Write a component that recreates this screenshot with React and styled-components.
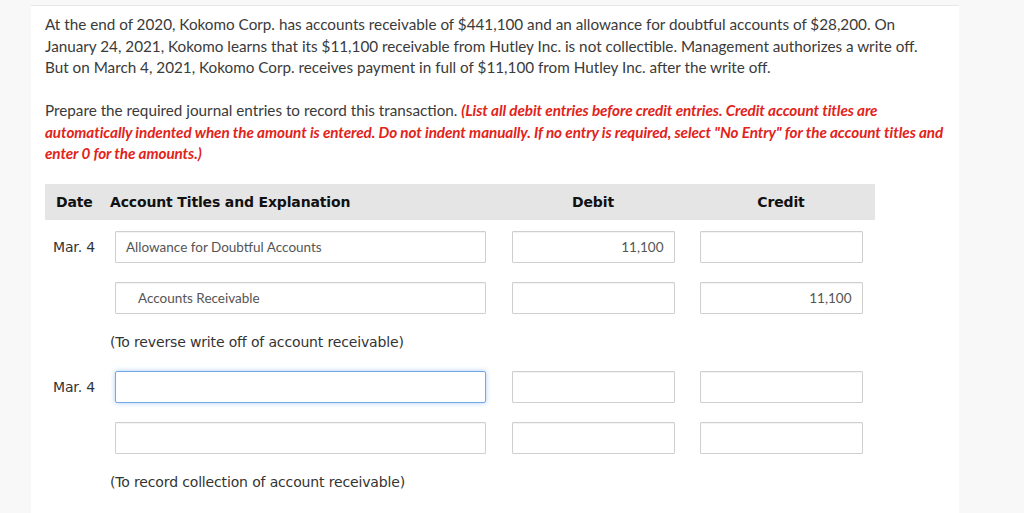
import React from 'react';
import styled, { createGlobalStyle } from 'styled-components';

const GlobalStyle = createGlobalStyle`
    html, body {
        margin: 0;
        padding: 0;
        background-color: #f8f8f8;
    }
    body {
        font-family: Lato, "Open Sans", sans-serif;
        color: #333;
    }
`;

const Page = styled.div`
    display: flex;
    height: 513px;
    overflow: hidden;
`;

const Gutter = styled.div`
    width: 31px;
    flex-shrink: 0;
`;

const Panel = styled.div`
    width: 928px;
    flex-shrink: 0;
    margin-top: 5px;
    background-color: #ffffff;
    border-top: 1px solid #e8e8e8;
    padding: 8px 0 0 14px;
    box-sizing: border-box;
`;

const Paragraph = styled.p`
    max-width: ${props => props.width || 898}px;
    margin: 0 0 ${props => props.gap || 0}px 0;
    font-size: 15.25px;
    line-height: 21.5px;
    color: #3a3a3a;
`;

const Instructions = styled.span`
    color: #e2231a;
    font-weight: 700;
    font-style: italic;
    letter-spacing: -0.08px;
`;

const COLUMNS = '58px 396px 188px 188px';

const HeaderBar = styled.div`
    display: grid;
    grid-template-columns: ${COLUMNS};
    width: 830px;
    align-items: center;
    height: 36px;
    margin-top: 19px;
    background-color: #e5e5e5;
    font-family: "DejaVu Sans", Verdana, sans-serif;
    font-weight: 700;
    font-size: 14px;
    letter-spacing: -0.15px;
    color: #111;
`;

const HeadCell = styled.div`
    padding-left: ${props => props.pad || 0}px;
    text-align: ${props => props.center ? 'center' : 'left'};
`;

const EntryRow = styled.div`
    display: grid;
    grid-template-columns: ${COLUMNS};
    align-items: center;
    margin-top: ${props => props.top}px;
`;

const DateCell = styled.div`
    padding-left: 8px;
    font-family: "DejaVu Sans", Verdana, sans-serif;
    font-size: 14px;
    letter-spacing: -0.15px;
    color: #333;
`;

const FieldCell = styled.div`
    display: flex;
    justify-content: ${props => props.center ? 'center' : 'flex-start'};
    padding-left: ${props => props.pad || 0}px;
`;

const Field = styled.div`
    width: ${props => props.width}px;
    height: 32px;
    box-sizing: border-box;
    border: 1px solid ${props => props.focused ? '#74a7e8' : '#cfcfcf'};
    border-radius: ${props => props.focused ? 2 : 1}px;
    box-shadow: ${props => props.focused
        ? '0 0 5px rgba(102, 165, 235, 0.55)'
        : 'inset 0 1px 1px rgba(0, 0, 0, 0.05)'};
    background-color: #fff;
    display: flex;
    align-items: center;
    justify-content: ${props => props.right ? 'flex-end' : 'flex-start'};
    padding: 0 10px 0 ${props => props.indent ? 22 : 10}px;
    font-family: Lato, sans-serif;
    font-size: 13.5px;
    color: #555;
`;

const ExplanationRow = styled.div`
    display: grid;
    grid-template-columns: ${COLUMNS};
`;

const Explanation = styled.div`
    grid-column: 2 / 5;
    padding-left: 7px;
    margin-top: 18px;
    font-family: "DejaVu Sans", Verdana, sans-serif;
    font-size: 14px;
    letter-spacing: -0.15px;
    line-height: 20px;
    color: #333;
`;

const entries = [
    {
        rows: [
            { date: 'Mar. 4', account: 'Allowance for Doubtful Accounts', debit: '11,100', credit: '' },
            { date: '', account: 'Accounts Receivable', debit: '', credit: '11,100', indent: true },
        ],
        note: '(To reverse write off of account receivable)',
    },
    {
        rows: [
            { date: 'Mar. 4', account: '', debit: '', credit: '', focused: true },
            { date: '', account: '', debit: '', credit: '' },
        ],
        note: '(To record collection of account receivable)',
    },
];

function JournalEntry({ entry, first }) {
    return (
        <>
            {entry.rows.map((row, i) => (
                <EntryRow key={i} top={i === 0 && first ? 11 : 19}>
                    <DateCell>{row.date}</DateCell>
                    <FieldCell pad={12}>
                        <Field width={371} indent={row.indent} focused={row.focused}>{row.account}</Field>
                    </FieldCell>
                    <FieldCell center>
                        <Field width={163} right>{row.debit}</Field>
                    </FieldCell>
                    <FieldCell center>
                        <Field width={163} right>{row.credit}</Field>
                    </FieldCell>
                </EntryRow>
            ))}
            <ExplanationRow>
                <Explanation>{entry.note}</Explanation>
            </ExplanationRow>
        </>
    );
}

function App() {
    return (
        <Page>
            <GlobalStyle />
            <Gutter />
            <Panel>
                <Paragraph gap={21.5}>
                    At the end of 2020, Kokomo Corp. has accounts receivable of $441,100 and an allowance for doubtful accounts of $28,200. On January 24, 2021, Kokomo learns that its $11,100 receivable from Hutley Inc. is not collectible. Management authorizes a write off. But on March 4, 2021, Kokomo Corp. receives payment in full of $11,100 from Hutley Inc. after the write off.
                </Paragraph>
                <Paragraph width={906}>
                    Prepare the required journal entries to record this transaction.{' '}
                    <Instructions>
                        (List all debit entries before credit entries. Credit account titles are automatically indented when the amount is entered. Do not indent manually. If no entry is required, select "No Entry" for the account titles and enter 0 for the amounts.)
                    </Instructions>
                </Paragraph>
                <HeaderBar>
                    <HeadCell pad={11}>Date</HeadCell>
                    <HeadCell pad={7}>Account Titles and Explanation</HeadCell>
                    <HeadCell center>Debit</HeadCell>
                    <HeadCell center>Credit</HeadCell>
                </HeaderBar>
                {entries.map((entry, i) => (
                    <JournalEntry key={i} entry={entry} first={i === 0} />
                ))}
            </Panel>
        </Page>
    );
}

export default App;
